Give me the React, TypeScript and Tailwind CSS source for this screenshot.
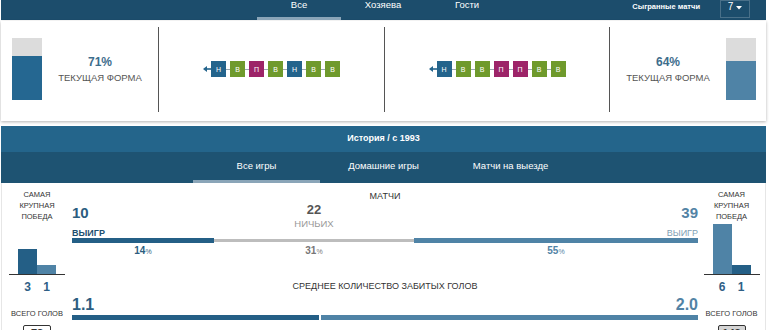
import React from "react";

const DARK = "bg-[#245f86]";
const LIGHT = "bg-[#4f83a6]";

type R = "Н" | "В" | "П";

function FormBox({ r }: { r: R }) {
  const c = r === "Н" ? "bg-[#24648c]" : r === "В" ? "bg-[#6f9a2c]" : "bg-[#9d2468]";
  return (
    <div className={`w-[15px] h-[16px] ${c} flex items-center justify-center text-white text-[7px] leading-none`}>
      {r}
    </div>
  );
}

function FormRow({ items }: { items: R[] }) {
  return (
    <div className="flex items-center">
      <svg width="8" height="8" viewBox="0 0 8 8">
        <path d="M0 4 L4 1 L4 7 Z" fill="#24648c" />
        <rect x="3" y="3.2" width="5" height="1.6" fill="#24648c" />
      </svg>
      {items.map((r, i) => (
        <React.Fragment key={i}>
          {i > 0 && <div className="w-[4px] h-[1px] bg-[#9aa7b0]" />}
          <FormBox r={r} />
        </React.Fragment>
      ))}
    </div>
  );
}

function Divider() {
  return <div className="w-[1px] bg-[#555] mt-[6px] mb-[9px] self-stretch" />;
}

function FormText({ pct }: { pct: string }) {
  return (
    <div className="flex-1 flex flex-col items-center mt-[1px]">
      <div className="text-[12px] font-bold leading-[15px] text-[#3d6d8c]">{pct}</div>
      <div className="text-[9.5px] leading-[13px] text-[#555] mt-[1px]">ТЕКУЩАЯ ФОРМА</div>
    </div>
  );
}

function SideCol({
  bars,
  total,
  boxBg,
}: {
  bars: { n: string; h: string; c: string }[];
  total: string;
  boxBg: string;
}) {
  return (
    <div className="flex flex-col items-center pt-[6px]">
      <div className="text-[7.5px] leading-[11px] text-[#333] text-center">
        <div>САМАЯ</div>
        <div>КРУПНАЯ</div>
        <div>ПОБЕДА</div>
      </div>
      <div className="w-[56px] h-[53px] border-b border-[#333] flex items-end justify-center">
        {bars.map((b, i) => (
          <div key={i} className={`w-[19px] ${b.h} ${b.c}`} />
        ))}
      </div>
      <div className="flex justify-center mt-[5px]">
        {bars.map((b, i) => (
          <div key={i} className="w-[19px] text-center text-[12px] leading-[14px] font-bold text-[#2f6086]">
            {b.n}
          </div>
        ))}
      </div>
      <div className="text-[7.5px] leading-[10px] text-[#333] mt-[15px]">ВСЕГО ГОЛОВ</div>
      <div
        className={`mt-[6px] w-[28px] h-[16px] border border-[#333] rounded-[2px] ${boxBg} text-[11px] font-bold leading-[14px] text-center text-[#333]`}
      >
        {total}
      </div>
    </div>
  );
}

export default function App() {
  return (
    <div className="w-[770px] h-[330px] overflow-hidden bg-white font-['Liberation_Sans',Arial,sans-serif]">
      {/* Header */}
      <div className="ml-[1px] w-[765px] h-[20px] bg-[#1c4d6c] flex text-white">
        <div className="w-[256px]" />
        {["Все", "Хозяева", "Гости"].map((t, i) => (
          <div key={t} className="w-[84px] h-[20px] flex flex-col justify-between items-center">
            <div className="text-[9.5px] leading-[9px]">{t}</div>
            <div className={`w-full h-[3px] ${i === 0 ? "bg-[#8aa5b8]" : ""}`} />
          </div>
        ))}
        <div className="flex-1" />
        <div className="text-[7.5px] font-bold leading-[13px] mr-[20px]">Сыгранные матчи</div>
        <div className="mr-[16px] w-[30px] h-[18px] border border-white/20 flex items-start justify-center pt-[1px]">
          <span className="text-[10px] leading-[10px]">7</span>
          <svg width="6" height="4" viewBox="0 0 6 4" className="ml-[3px] mt-[4px]">
            <path d="M0 0 L6 0 L3 3.5 Z" fill="#fff" />
          </svg>
        </div>
      </div>

      {/* Form card */}
      <div className="ml-[1px] mt-[1px] w-[765px] h-[100px] bg-white shadow-[0_1px_3px_rgba(0,0,0,0.3)] flex">
        <div className="w-[157px] flex items-center pb-[4px] pl-[11px]">
          <div className="w-[30px] h-[62px] flex flex-col">
            <div className="h-[18px] bg-[#dcdcdc]" />
            <div className="flex-1 bg-[#256791]" />
          </div>
          <FormText pct="71%" />
        </div>
        <Divider />
        <div className="w-[225px] flex items-center justify-center pb-[4px]">
          <FormRow items={["Н", "В", "П", "В", "Н", "В", "В"]} />
        </div>
        <Divider />
        <div className="w-[224px] flex items-center justify-center pb-[4px]">
          <FormRow items={["Н", "В", "В", "П", "П", "В", "В"]} />
        </div>
        <Divider />
        <div className="flex-1 flex items-center pb-[4px] pr-[10px]">
          <FormText pct="64%" />
          <div className="w-[30px] h-[62px] flex flex-col">
            <div className="h-[23px] bg-[#dcdcdc]" />
            <div className="flex-1 bg-[#4f83a6]" />
          </div>
        </div>
      </div>

      {/* History */}
      <div className="ml-[1px] mt-[5px] w-[765px]">
        <div className="h-[26px] bg-[#24658b] flex items-center justify-center text-white font-bold text-[9px]">
          История / с 1993
        </div>
        <div className="h-[31px] bg-[#1e5372] flex pl-[192px] text-white">
          {["Все игры", "Домашние игры", "Матчи на выезде"].map((t, i) => (
            <div key={t} className="w-[127px] flex flex-col justify-between items-center">
              <div className="text-[9.5px] leading-[12px] pt-[8px]">{t}</div>
              <div className={`w-full h-[3px] ${i === 0 ? "bg-[#8aa5b8]" : ""}`} />
            </div>
          ))}
        </div>

        {/* Body */}
        <div className="flex bg-white border-x border-[#e6e6e6] h-[160px]">
          <div className="w-[70px]">
            <SideCol
              bars={[
                { n: "3", h: "h-[25px]", c: DARK },
                { n: "1", h: "h-[9px]", c: LIGHT },
              ]}
              total="78"
              boxBg="bg-white"
            />
          </div>

          <div className="w-[626px] pt-[7px]">
            <div className="text-[9px] leading-[12px] text-center text-[#333]">МАТЧИ</div>
            <div className="flex h-[36px]">
              <div className="w-[142px] flex flex-col items-start">
                <div className="text-[15px] font-bold leading-[16px] mt-[3px] text-[#2c5d80]">10</div>
                <div className="text-[9px] font-bold leading-[10px] mt-[7px] text-[#1e5070]">ВЫИГР</div>
              </div>
              <div className="w-[200px] flex flex-col items-center">
                <div className="text-[13px] font-bold leading-[14px] mt-[1px] text-[#555]">22</div>
                <div className="text-[9.5px] leading-[12px] mt-[1px] text-[#999]">НИЧЬИХ</div>
              </div>
              <div className="flex-1 flex flex-col items-end">
                <div className="text-[15px] font-bold leading-[16px] mt-[3px] text-[#5283a5]">39</div>
                <div className="text-[9px] leading-[10px] mt-[7px] text-[#7f9fb5]">ВЫИГР</div>
              </div>
            </div>
            <div className="flex items-center h-[5px]">
              <div className="w-[142px] h-[5px] bg-[#245f86]" />
              <div className="w-[200px] h-[3px] bg-[#bdbdbd]" />
              <div className="flex-1 h-[5px] bg-[#4f83a6]" />
            </div>
            <div className="flex mt-[2px] text-[10px] leading-[12px] font-bold">
              <div className="w-[142px] text-center text-[#2c5d80]">
                14<span className="text-[7px] font-normal">%</span>
              </div>
              <div className="w-[200px] text-center text-[#777]">
                31<span className="text-[7px] font-normal">%</span>
              </div>
              <div className="flex-1 text-center text-[#5283a5]">
                55<span className="text-[7px] font-normal">%</span>
              </div>
            </div>
            <div className="mt-[22px] text-[9px] leading-[12px] text-center text-[#333]">
              СРЕДНЕЕ КОЛИЧЕСТВО ЗАБИТЫХ ГОЛОВ
            </div>
            <div className="flex justify-between mt-[4px] text-[16px] font-bold leading-[18px]">
              <div className="text-[#2c5d80]">1.1</div>
              <div className="text-[#5283a5]">2.0</div>
            </div>
            <div className="flex h-[5px] mt-[1px]">
              <div className="w-[247px] bg-[#245f86]" />
              <div className="w-[2px]" />
              <div className="flex-1 bg-[#4f83a6]" />
            </div>
          </div>

          <div className="flex-1">
            <SideCol
              bars={[
                { n: "6", h: "h-[50px]", c: LIGHT },
                { n: "1", h: "h-[9px]", c: DARK },
              ]}
              total="142"
              boxBg="bg-[#d4d4d4]"
            />
          </div>
        </div>
      </div>
    </div>
  );
}
